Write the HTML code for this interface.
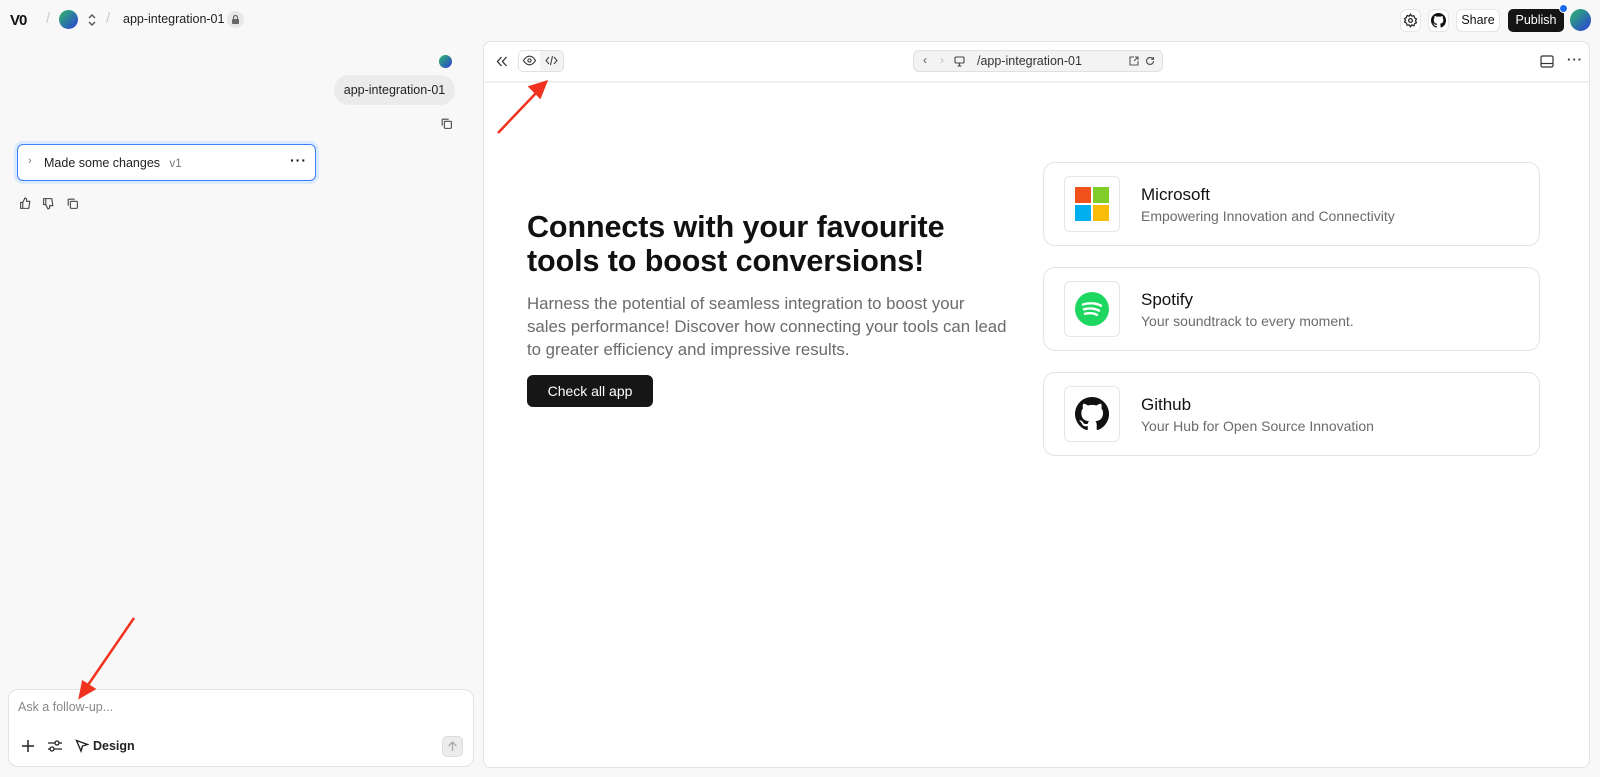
<!DOCTYPE html>
<html><head><meta charset="utf-8"><style>
*{box-sizing:border-box;margin:0;padding:0}
body{width:1600px;height:777px;background:#f8f8f8;font-family:"Liberation Sans",sans-serif;color:#111;position:relative;overflow:hidden}
.a{position:absolute}
.av{border-radius:50%;background:linear-gradient(135deg,#2fb86a,#2a3fd8)}
svg{display:block}
.btn{border:1px solid #e6e6e6;background:#fff;border-radius:6px}
.card{position:absolute;left:1043px;width:497px;height:84px;border:1px solid #e3e3e3;border-radius:12px;background:#fff}
.card .ic{position:absolute;left:20px;top:13px;width:56px;height:56px;border:1px solid #e6e6e6;border-radius:6px;display:flex;align-items:center;justify-content:center}
.card .t{position:absolute;left:97px;top:22px;font-size:17px;color:#111}
.card .s{position:absolute;left:97px;top:45px;font-size:14px;color:#6b6b6b}
</style></head><body>
<!-- top bar -->
<div class="a" style="left:10px;top:12px;font-weight:bold;font-size:15px;letter-spacing:-1px">V0</div>
<div class="a" style="left:46px;top:10px;color:#ccc;font-size:15px">/</div>
<div class="a av" style="left:59px;top:10px;width:19px;height:19px"></div>
<svg class="a" style="left:87px;top:13px" width="10" height="14" viewBox="0 0 10 14"><path d="M2 5l3-3 3 3M2 9l3 3 3-3" fill="none" stroke="#555" stroke-width="1.4"/></svg>
<div class="a" style="left:106px;top:10px;color:#ccc;font-size:15px">/</div>
<div class="a" style="left:123px;top:12px;font-size:12.5px;color:#222">app-integration-01</div>
<div class="a" style="left:227px;top:11px;width:17px;height:17px;border-radius:50%;background:#e8e8e8"></div>
<svg class="a" style="left:231px;top:14px" width="9" height="11" viewBox="0 0 9 11"><rect x="1" y="5" width="7" height="5" rx="1" fill="#666"/><path d="M2.5 5V3.5a2 2 0 014 0V5" fill="none" stroke="#666" stroke-width="1.2"/></svg>

<div class="a btn" style="left:1400px;top:9px;width:21px;height:23px"></div>
<svg class="a" style="left:1403px;top:13px" width="15" height="15" viewBox="0 0 24 24" fill="none" stroke="#222" stroke-width="2"><circle cx="12" cy="12" r="3"/><path d="M12 2l2 3 3.5-.5 1 3.3 3 1.7-1.5 3 1.5 3-3 1.7-1 3.3L14 19l-2 3-2-3-3.5.5-1-3.3-3-1.7L4 12 2.5 9l3-1.7 1-3.3L10 5z"/></svg>
<div class="a btn" style="left:1428px;top:9px;width:21px;height:23px"></div>
<svg class="a" style="left:1431px;top:13px" width="15" height="15" viewBox="0 0 16 16"><path fill="#111" d="M8 0a8 8 0 00-2.5 15.6c.4 0 .5-.2.5-.4v-1.5c-2.2.5-2.7-1-2.7-1-.4-.9-.9-1.2-.9-1.2-.7-.5.1-.5.1-.5.8.1 1.2.8 1.2.8.7 1.3 1.9.9 2.4.7 0-.5.3-.9.5-1.1-1.8-.2-3.6-.9-3.6-4 0-.9.3-1.6.8-2.1-.1-.2-.4-1 .1-2.1 0 0 .7-.2 2.2.8a7.600 7.600 0 014 0c1.5-1 2.2-.8 2.2-.8.4 1.1.2 1.900.1 2.1.5.6.8 1.300.8 2.1 0 3.1-1.900 3.800-3.600 4 .3.3.6.8.6 1.500v2.200c0 .2.1.5.6.4A8 8 0 008 0z"/></svg>
<div class="a btn" style="left:1456px;top:9px;width:44px;height:23px;font-size:12.5px;text-align:center;line-height:21px">Share</div>
<div class="a" style="left:1508px;top:9px;width:56px;height:23px;background:#151515;border-radius:5px;color:#fff;font-size:12.5px;text-align:center;line-height:23px">Publish</div>
<div class="a" style="left:1559px;top:4px;width:9px;height:9px;border-radius:50%;background:#1a6af0;border:1px solid #fff"></div>
<div class="a av" style="left:1570px;top:9px;width:21px;height:22px"></div>

<!-- left chat -->
<div class="a av" style="left:439px;top:55px;width:13px;height:13px"></div>
<div class="a" style="left:334px;top:75px;width:121px;height:30px;background:#ebebeb;border-radius:15px;font-size:12.5px;line-height:30px;text-align:center;color:#222">app-integration-01</div>
<svg class="a" style="left:440px;top:117px" width="13" height="13" viewBox="0 0 24 24" fill="none" stroke="#444" stroke-width="2"><rect x="8" y="8" width="13" height="13" rx="2"/><path d="M4 16V5a1 1 0 011-1h11"/></svg>
<div class="a" style="left:17px;top:144px;width:299px;height:37px;border:1.5px solid #3b82f6;border-radius:6px;background:#fff;box-shadow:0 0 0 3px #dbeafe"></div>
<div class="a" style="left:28px;top:155px;font-size:11px;color:#777">›</div>
<div class="a" style="left:44px;top:156px;font-size:12.5px;color:#222">Made some changes <span style="color:#777;font-size:11.5px;margin-left:6px">v1</span></div>
<div class="a" style="left:290px;top:152px;font-size:14px;font-weight:bold;letter-spacing:1px">···</div>
<svg class="a" style="left:19px;top:197px" width="13" height="13" viewBox="0 0 24 24" fill="none" stroke="#444" stroke-width="2"><path d="M7 10v11H3V10zM7 10l4-8c2 0 3 1 3 3v3h6l-2 13H7"/></svg>
<svg class="a" style="left:42px;top:197px" width="13" height="13" viewBox="0 0 24 24" fill="none" stroke="#444" stroke-width="2"><path d="M7 14V3H3v11zM7 14l4 8c2 0 3-1 3-3v-3h6L18 3H7"/></svg>
<svg class="a" style="left:66px;top:197px" width="13" height="13" viewBox="0 0 24 24" fill="none" stroke="#444" stroke-width="2"><rect x="8" y="8" width="13" height="13" rx="2"/><path d="M4 16V5a1 1 0 011-1h11"/></svg>

<div class="a" style="left:8px;top:689px;width:466px;height:78px;background:#fff;border:1px solid #e3e3e3;border-radius:10px"></div>
<div class="a" style="left:18px;top:700px;font-size:12.5px;color:#888">Ask a follow-up...</div>
<svg class="a" style="left:21px;top:739px" width="14" height="14" viewBox="0 0 14 14"><path d="M7 1v12M1 7h12" stroke="#222" stroke-width="1.5"/></svg>
<svg class="a" style="left:47px;top:739px" width="15" height="14" viewBox="0 0 15 14" fill="none" stroke="#222" stroke-width="1.3"><path d="M1 4h14M1 10h14"/><circle cx="10" cy="4" r="2" fill="#fff"/><circle cx="5" cy="10" r="2" fill="#fff"/></svg>
<svg class="a" style="left:75px;top:739px" width="14" height="14" viewBox="0 0 14 14" fill="none" stroke="#222" stroke-width="1.4"><path d="M1.5 1.5l11 4-5 1.5-1.5 5z"/></svg>
<div class="a" style="left:93px;top:739px;font-size:12.5px;font-weight:bold;color:#222">Design</div>
<div class="a" style="left:442px;top:736px;width:21px;height:21px;background:#ececec;border:1px solid #ddd;border-radius:5px"></div>
<svg class="a" style="left:447px;top:741px" width="11" height="11" viewBox="0 0 11 11" fill="none" stroke="#aaa" stroke-width="1.3"><path d="M5.5 10V1M1.5 5l4-4 4 4"/></svg>

<!-- preview -->
<div class="a" style="left:483px;top:41px;width:1107px;height:727px;background:#fff;border:1px solid #e3e3e3;border-radius:8px"></div>
<div class="a" style="left:484px;top:81px;width:1105px;height:2px;background:#f0f0f0"></div>
<svg class="a" style="left:496px;top:56px" width="12" height="11" viewBox="0 0 12 11" fill="none" stroke="#333" stroke-width="1.3"><path d="M5.5 1L1.5 5.5 5.5 10M10.5 1l-4 4.5 4 4.5"/></svg>
<div class="a" style="left:518px;top:50px;width:46px;height:22px;border:1px solid #e0e0e0;border-radius:5px;background:#f3f3f3"></div>
<div class="a" style="left:519px;top:51px;width:21px;height:20px;background:#fff;border-radius:4px 0 0 4px"></div>
<svg class="a" style="left:523px;top:55px" width="13" height="11" viewBox="0 0 24 20" fill="none" stroke="#333" stroke-width="2"><path d="M1 10s4-8 11-8 11 8 11 8-4 8-11 8S1 10 1 10z"/><circle cx="12" cy="10" r="3"/></svg>
<svg class="a" style="left:545px;top:55px" width="13" height="11" viewBox="0 0 13 11" fill="none" stroke="#444" stroke-width="1.1"><path d="M4 2L1 5.5 4 9M9 2l3 3.5L9 9M7.5 1l-2 9"/></svg>
<div class="a" style="left:913px;top:50px;width:250px;height:22px;background:#f3f3f3;border:1px solid #e0e0e0;border-radius:6px"></div>
<div class="a" style="left:923px;top:53px;font-size:12px;color:#555">‹</div>
<div class="a" style="left:940px;top:53px;font-size:12px;color:#bbb">›</div>
<svg class="a" style="left:954px;top:56px" width="11" height="11" viewBox="0 0 11 11" fill="none" stroke="#444" stroke-width="1.1"><rect x="1" y="1" width="9" height="6" rx="1"/><path d="M5.5 7v3M3.5 10h4"/></svg>
<div class="a" style="left:977px;top:54px;font-size:12.5px;color:#333">/app-integration-01</div>
<svg class="a" style="left:1129px;top:56px" width="10" height="10" viewBox="0 0 10 10" fill="none" stroke="#555" stroke-width="1.1"><path d="M5 1H1v8h8V5M6 1h3v3M9 1L5 5"/></svg>
<svg class="a" style="left:1145px;top:56px" width="10" height="10" viewBox="0 0 10 10" fill="none" stroke="#555" stroke-width="1.2"><path d="M8.5 5A3.5 3.5 0 115 1.5c1.2 0 2.200.5 2.900 1.400M8.5 1v2.300H6.300"/></svg>
<svg class="a" style="left:1540px;top:55px" width="14" height="13" viewBox="0 0 14 13" fill="none" stroke="#333" stroke-width="1.2"><rect x="1" y="1" width="12" height="11" rx="1.5"/><path d="M1 8.5h12"/></svg>
<div class="a" style="left:1567px;top:52px;font-size:13px;font-weight:bold;color:#333;letter-spacing:1px">···</div>

<div class="a" style="left:527px;top:210px;font-size:30.5px;font-weight:bold;line-height:34px;color:#111;letter-spacing:-0.1px">Connects with your favourite<br>tools to boost conversions!</div>
<div class="a" style="left:527px;top:292px;width:500px;font-size:16.8px;line-height:23px;color:#6b6b6b">Harness the potential of seamless integration to boost your<br>sales performance! Discover how connecting your tools can lead<br>to greater efficiency and impressive results.</div>
<div class="a" style="left:527px;top:375px;width:126px;height:32px;background:#161616;border-radius:6px;color:#fff;font-size:14px;text-align:center;line-height:32px">Check all app</div>

<div class="card" style="top:162px"><div class="ic"><svg width="34" height="34" viewBox="0 0 34 34"><rect x="0" y="0" width="16" height="16" fill="#f1511b"/><rect x="18" y="0" width="16" height="16" fill="#80cc28"/><rect x="0" y="18" width="16" height="16" fill="#00adef"/><rect x="18" y="18" width="16" height="16" fill="#fbbc09"/></svg></div><div class="t">Microsoft</div><div class="s">Empowering Innovation and Connectivity</div></div>
<div class="card" style="top:267px"><div class="ic"><svg width="34" height="34" viewBox="0 0 34 34"><circle cx="17" cy="17" r="17" fill="#1ed760"/><path d="M8 12.5c6-2 13-1.500 18 1.200M9 17.300c5-1.500 11-1 15 1.300M10 21.800c4-1.100 9-.800 12 1" fill="none" stroke="#fff" stroke-width="2.4" stroke-linecap="round"/></svg></div><div class="t">Spotify</div><div class="s">Your soundtrack to every moment.</div></div>
<div class="card" style="top:372px"><div class="ic"><svg width="34" height="34" viewBox="0 0 16 16"><path fill="#111" d="M8 0a8 8 0 00-2.5 15.6c.4 0 .5-.2.5-.4v-1.5c-2.2.5-2.7-1-2.7-1-.4-.9-.9-1.2-.9-1.2-.7-.5.1-.5.1-.5.8.1 1.2.8 1.2.8.7 1.3 1.9.9 2.4.7 0-.5.3-.9.5-1.1-1.8-.2-3.6-.9-3.6-4 0-.9.3-1.6.8-2.1-.1-.2-.4-1 .1-2.100 0 0 .7-.2 2.2.8a7.600 7.600 0 014 0c1.5-1 2.200-.8 2.200-.8.4 1.100.2 1.900.1 2.100.5.6.8 1.300.8 2.100 0 3.100-1.900 3.800-3.600 4 .3.3.6.8.6 1.500v2.200c0 .2.1.5.6.4A8 8 0 008 0z"/></svg></div><div class="t">Github</div><div class="s">Your Hub for Open Source Innovation</div></div>

<!-- red arrows -->
<svg class="a" style="left:0;top:0" width="1600" height="777" viewBox="0 0 1600 777"><g stroke="#f0321e" stroke-width="2.5" fill="#f0321e"><path d="M498 133L537 92" fill="none"/><path d="M546 82l-16 5 10 10z"/><path d="M134 618L88 685" fill="none"/><path d="M80 697l14-8-11-7z"/></g></svg>
</body></html>
